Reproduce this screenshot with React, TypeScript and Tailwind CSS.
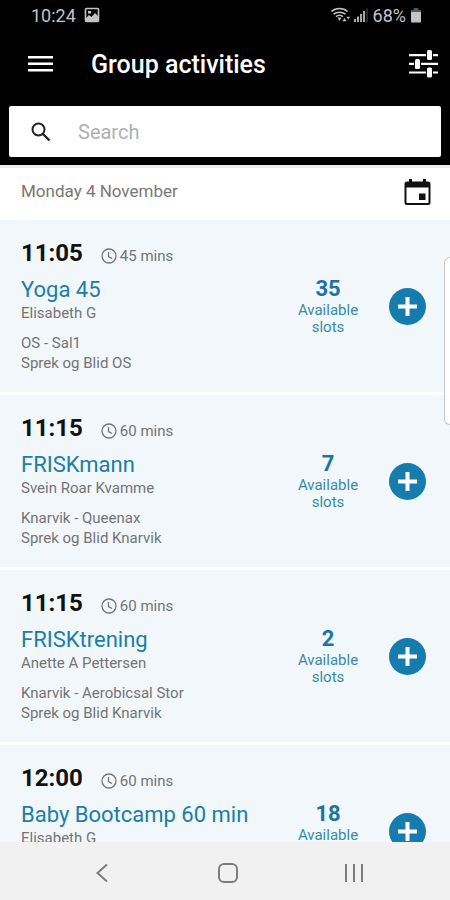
import { useState } from "react";

interface Activity {
  id: number;
  time: string;
  mins: number;
  title: string;
  instructor: string;
  room: string;
  club: string;
  slots: number;
}

const activities: Activity[] = [
  { id: 1, time: "11:05", mins: 45, title: "Yoga 45", instructor: "Elisabeth G", room: "OS - Sal1", club: "Sprek og Blid OS", slots: 35 },
  { id: 2, time: "11:15", mins: 60, title: "FRISKmann", instructor: "Svein Roar Kvamme", room: "Knarvik - Queenax", club: "Sprek og Blid Knarvik", slots: 7 },
  { id: 3, time: "11:15", mins: 60, title: "FRISKtrening", instructor: "Anette A Pettersen", room: "Knarvik - Aerobicsal Stor", club: "Sprek og Blid Knarvik", slots: 2 },
  { id: 4, time: "12:00", mins: 60, title: "Baby Bootcamp 60 min", instructor: "Elisabeth G", room: "OS - Sal1", club: "Sprek og Blid OS", slots: 18 },
];

function StatusBar() {
  return (
    <div className="flex h-[30px] items-center justify-between pr-7 pl-[31px] text-[18px] text-[#c4c4c4]">
      <div className="flex items-center gap-2">
        <span>10:24</span>
        <svg className="h-4 w-4" viewBox="0 0 16 16" fill="none">
          <rect x="1.500" y="1.500" width="13" height="13" rx="1" stroke="#c4c4c4" strokeWidth="1.600" />
          <path d="M2 14v-3l3-3 2.500 2L11 6l3 3v5z" fill="#c4c4c4" />
          <path d="M4 4h3v2.500H4z" fill="#c4c4c4" />
        </svg>
      </div>
      <div className="flex items-center">
        <svg className="h-4 w-5" viewBox="0 0 20 16" fill="none" stroke="#c4c4c4" strokeWidth="1.600">
          <path d="M0.500 4.500c4.500-4 11.500-4 16 0M2.500 7.200c3.500-2.700 8.500-2.700 12 0M5 9.700c2-1.600 5-1.600 7 0" />
          <path d="M6.500 10.500h4l-2 3.500z" fill="#c4c4c4" stroke="none" />
          <path d="m11 14.500 2.500-4 2.500 4zM15 9.500h4.500L17.300 13z" fill="#c4c4c4" stroke="#000" strokeWidth="0.600" />
        </svg>
        <svg className="ml-0.5 h-4 w-4" viewBox="0 0 16 16" fill="#a8a8a8">
          <path d="M1 12h2v3H1zM4 9.500h2V15H4zM7 7h2v8H7zM10 4h2v11h-2z" />
          <path d="M13.500 1.500h1V15h-1z" fill="#555" />
        </svg>
        <span className="ml-1">68%</span>
        <svg className="ml-1 h-4 w-3" viewBox="0 0 12 16">
          <path d="M3.500 1h5v2H11v3H1V3h2.500z" fill="#555" />
          <path d="M1 5h10v9.500a1 1 0 0 1-1 1H2a1 1 0 0 1-1-1z" fill="#c4c4c4" />
        </svg>
      </div>
    </div>
  );
}

function TopBar() {
  return (
    <div className="flex h-[67px] items-center pr-3 pl-7">
      <button type="button" aria-label="Menu">
        <svg className="h-[18px] w-[25px]" viewBox="0 0 25 18" fill="#fff">
          <path d="M0 1h25v2.500H0zM0 7.500h25V10H0zM0 14h25v2.500H0z" />
        </svg>
      </button>
      <h1 className="ml-[38px] flex-1 pt-0.5 text-[25px] font-medium text-white">Group activities</h1>
      <button type="button" aria-label="Filters">
        <svg className="h-7 w-[29px]" viewBox="0 0 29 28" fill="#fff">
          <path d="M0 4h29v2.200H0zM0 12.800h29V15H0zM0 21.400h29v2.200H0z" />
          <rect x="17" y="0" width="7" height="10" fill="#000" />
          <rect x="5" y="9" width="7" height="10" fill="#000" />
          <rect x="17" y="17.600" width="7" height="10" fill="#000" />
          <rect x="18" y="0" width="5" height="10" rx="1.500" />
          <rect x="6" y="9" width="5" height="10" rx="1.500" />
          <rect x="18" y="17.600" width="5" height="10" rx="1.500" />
        </svg>
      </button>
    </div>
  );
}

function ActivityRow({ activity }: { activity: Activity }) {
  return (
    <li className="flex items-center border-b-3 border-white bg-[#f1f7fb] pr-6 pl-[21px]">
      <div className="min-w-0 flex-1 py-[19px] text-[15px] leading-5 text-[#747474]">
        <div className="flex h-7 items-center">
          <span className="text-[24px] font-bold text-[#111]">{activity.time}</span>
          <div className="ml-[18px] flex items-center gap-[3px] pt-1.5">
            <svg className="h-4 w-4" viewBox="0 0 16 16" fill="none" stroke="#747474" strokeWidth="1.300">
              <circle cx="8" cy="8" r="7" />
              <path d="M7.500 4v4.500l3.500 2" />
            </svg>
            <span>{activity.mins} mins</span>
          </div>
        </div>
        <h2 className="mt-2.5 truncate text-[22px] leading-[26px] text-[#1a7ea8]">{activity.title}</h2>
        <p>{activity.instructor}</p>
        <p className="mt-2.5">{activity.room}</p>
        <p>{activity.club}</p>
      </div>
      <div className="w-20 text-center text-[15px] leading-[17px] text-[#3a8ba6]">
        <p className="text-[22px] leading-[26px] font-bold text-[#1d74a3]">{activity.slots}</p>
        <p>Available slots</p>
      </div>
      <button type="button" aria-label={`Book ${activity.title}`} className="ml-[21px] h-[37px] w-[37px] rounded-full bg-[#167cae]">
        <svg viewBox="0 0 37 37" fill="#fff">
          <path d="M16.500 9h4v7.500H28v4h-7.500V28h-4v-7.500H9v-4h7.500z" />
        </svg>
      </button>
    </li>
  );
}

function NavBar() {
  return (
    <nav className="grid h-[58px] shrink-0 grid-cols-3 items-center bg-[#f1f1f1] pt-1 pr-[33px] pl-[39px]">
      <button type="button" aria-label="Back" className="flex justify-center">
        <svg className="h-5 w-4" viewBox="0 0 16 20" fill="none" stroke="#7d7d7d" strokeWidth="2">
          <path d="M13 1.500 3.500 10l9.500 8.500" />
        </svg>
      </button>
      <button type="button" aria-label="Home" className="flex justify-center">
        <svg className="h-5 w-5" viewBox="0 0 20 20" fill="none" stroke="#7d7d7d" strokeWidth="2">
          <rect x="1" y="1" width="18" height="18" rx="5" />
        </svg>
      </button>
      <button type="button" aria-label="Recent apps" className="flex justify-center">
        <svg className="h-5 w-5" viewBox="0 0 20 20" fill="#7d7d7d">
          <path d="M1 1h2v18H1zM9 1h2v18H9zM17 1h2v18h-2z" />
        </svg>
      </button>
    </nav>
  );
}

export default function App() {
  const [query, setQuery] = useState("");
  const needle = query.toLowerCase();
  const visible = activities.filter((a) => a.title.toLowerCase().includes(needle));

  return (
    <div className="flex h-screen flex-col overflow-hidden bg-white font-[Roboto,sans-serif]">
      <header className="shrink-0 bg-black">
        <StatusBar />
        <TopBar />
        <div className="px-[9px] pt-[9px] pb-2">
          <label className="flex h-[51px] items-center rounded-xs bg-white pl-[22px]">
            <svg className="h-5 w-5" viewBox="0 0 20 20" fill="none" stroke="#222" strokeWidth="2">
              <circle cx="7.500" cy="7.500" r="6" />
              <path d="m12 12 6.500 6.500" strokeWidth="2.400" />
            </svg>
            <input
              type="text"
              aria-label="Search"
              placeholder="Search"
              value={query}
              onChange={(e) => setQuery(e.target.value)}
              className="ml-[27px] min-w-0 flex-1 text-[20px] text-[#222] outline-none placeholder:text-[#b0b0b0]"
            />
          </label>
        </div>
      </header>

      <div className="flex h-[55px] shrink-0 items-center justify-between border-t-3 border-[#efedef] pr-[19px] pb-1 pl-[21px]">
        <h2 className="text-[17px] text-[#777]">Monday 4 November</h2>
        <button type="button" aria-label="Pick a date">
          <svg className="h-[27px] w-[27px]" viewBox="0 0 27 27">
            <path d="M5 0h3v2.500h11V0h3v2.500h2a2.500 2.500 0 0 1 2.500 2.500v18.500A2.500 2.500 0 0 1 24 26H3a2.500 2.500 0 0 1-2.500-2.500V5A2.500 2.500 0 0 1 3 2.500h2zM2.500 8.500v15.500h22V8.500z" fill="#111" fillRule="evenodd" />
            <path d="M15 14.500h6.500v6.500H15z" fill="#111" />
          </svg>
        </button>
      </div>

      <main className="relative min-h-0 flex-1">
        <ul className="h-full overflow-y-auto [scrollbar-width:none]">
          {visible.map((a) => (
            <ActivityRow key={a.id} activity={a} />
          ))}
        </ul>
        <div className="absolute top-[37px] right-0 h-[168px] w-1.5 rounded-l-md border border-r-0 border-[#c4c8ca] bg-white" />
      </main>

      <NavBar />
    </div>
  );
}
